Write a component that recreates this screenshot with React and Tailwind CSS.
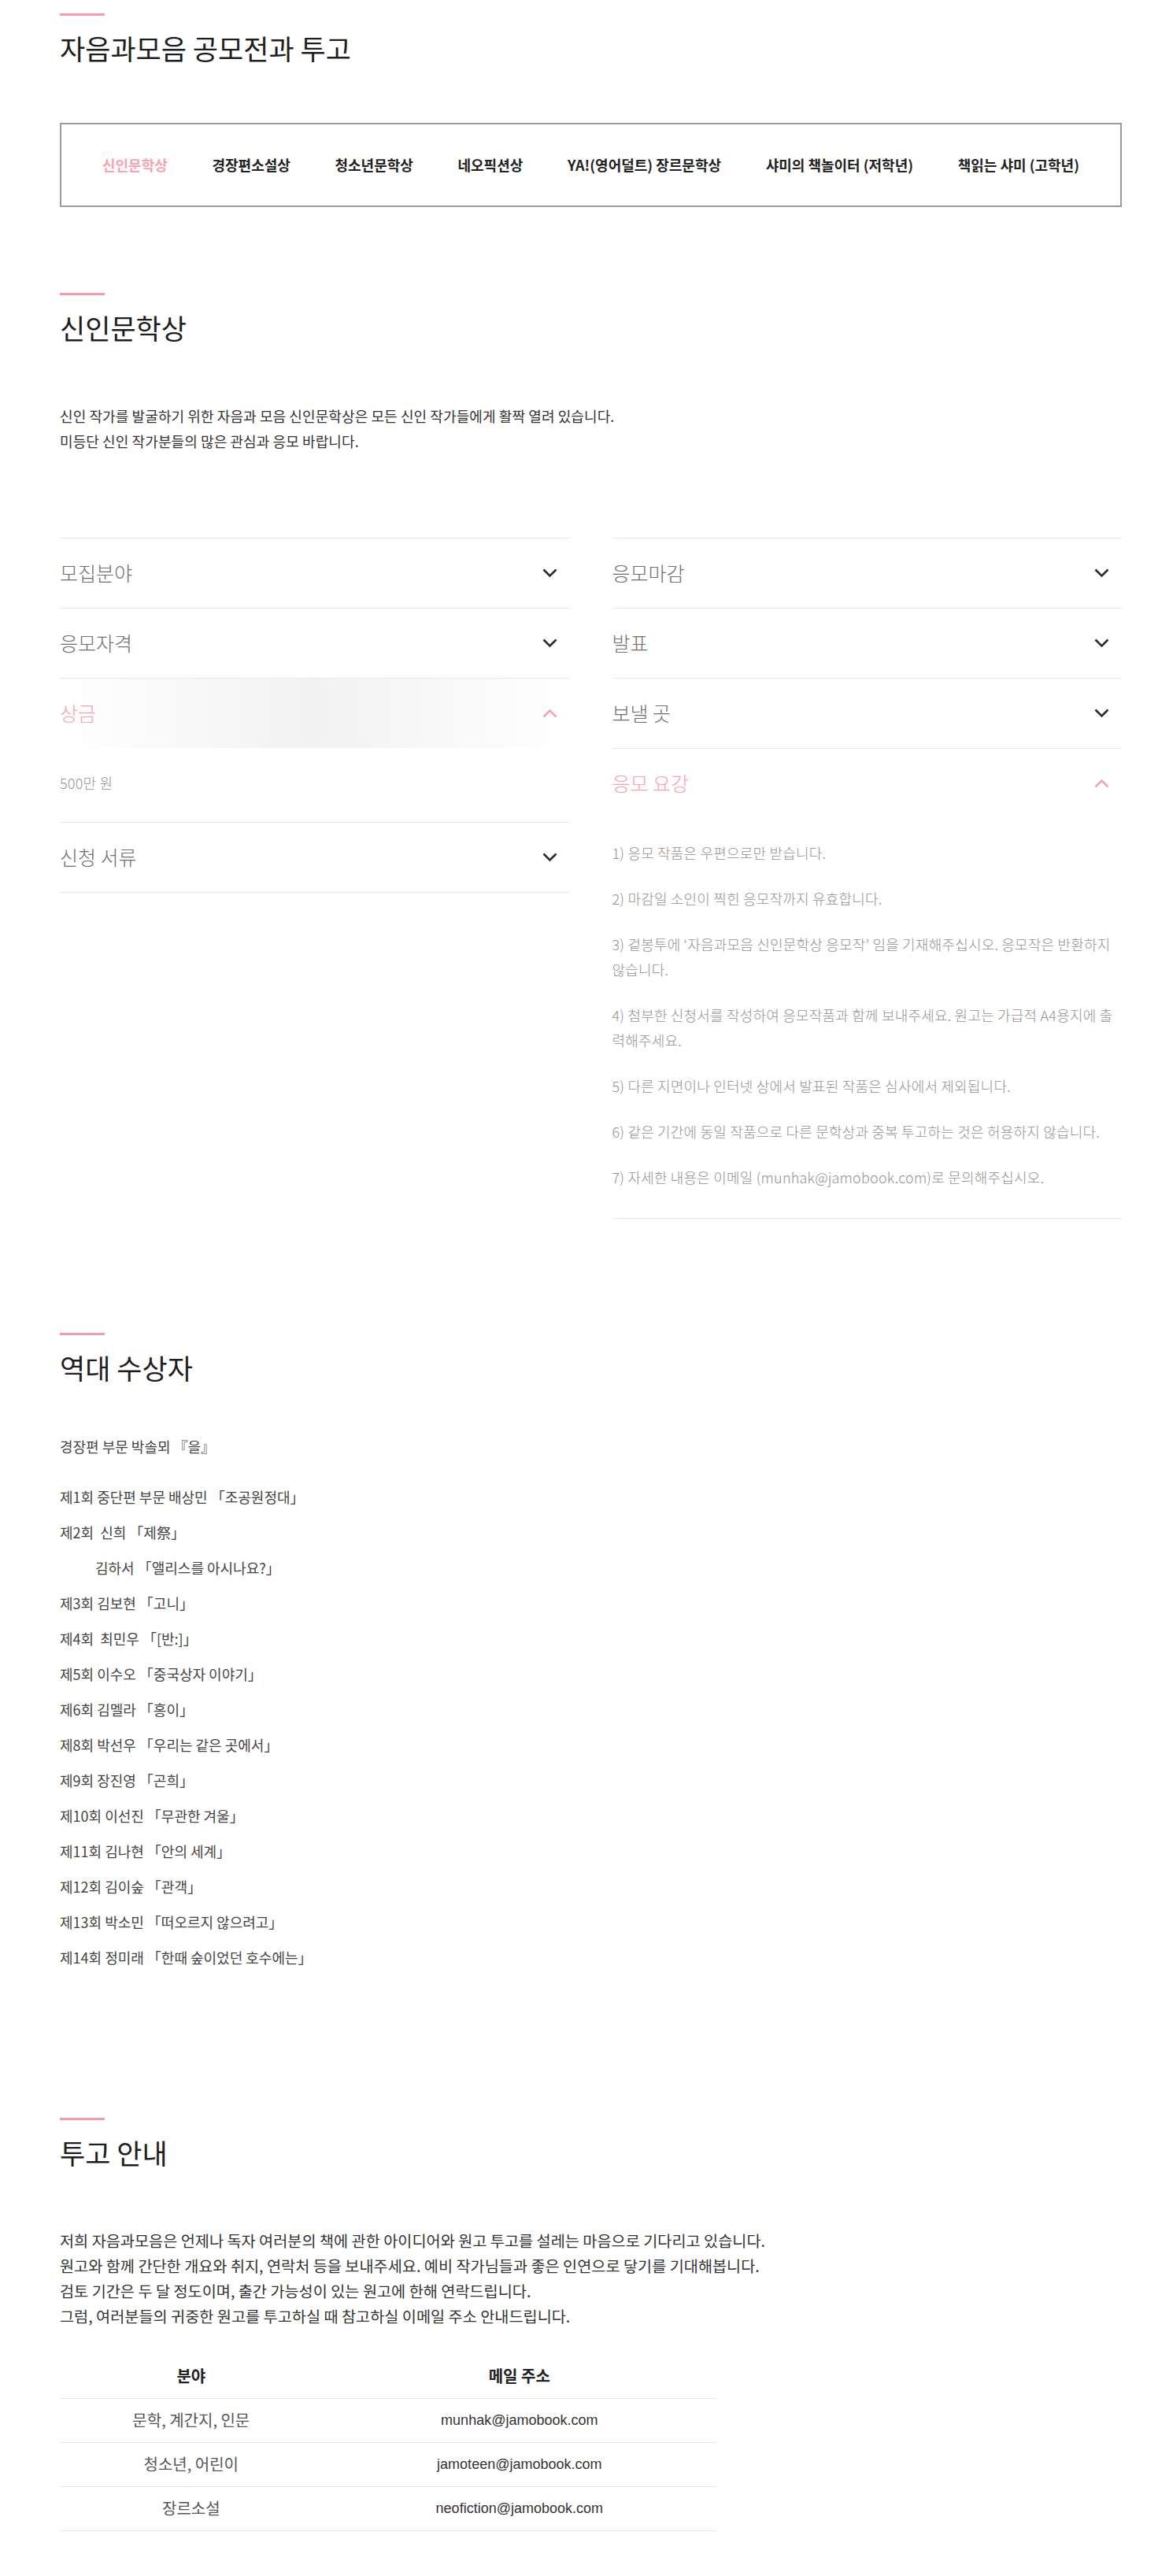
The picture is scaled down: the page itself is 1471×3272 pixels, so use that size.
import { useState } from "react";

const tabs = [
  "신인문학상",
  "경장편소설상",
  "청소년문학상",
  "네오픽션상",
  "YA!(영어덜트) 장르문학상",
  "샤미의 책놀이터 (저학년)",
  "책읽는 샤미 (고학년)",
];

const leftItems = [
  { title: "모집분야" },
  { title: "응모자격" },
  { title: "상금", open: true, shade: true, body: ["500만 원"] },
  { title: "신청 서류" },
];

const rightItems = [
  { title: "응모마감" },
  { title: "발표" },
  { title: "보낼 곳" },
  {
    title: "응모 요강",
    open: true,
    body: [
      "1) 응모 작품은 우편으로만 받습니다.",
      "2) 마감일 소인이 찍힌 응모작까지 유효합니다.",
      "3) 겉봉투에 ‘자음과모음 신인문학상 응모작’ 임을 기재해주십시오. 응모작은 반환하지 않습니다.",
      "4) 첨부한 신청서를 작성하여 응모작품과 함께 보내주세요. 원고는 가급적 A4용지에 출력해주세요.",
      "5) 다른 지면이나 인터넷 상에서 발표된 작품은 심사에서 제외됩니다.",
      "6) 같은 기간에 동일 작품으로 다른 문학상과 중복 투고하는 것은 허용하지 않습니다.",
      "7) 자세한 내용은 이메일 (munhak@jamobook.com)로 문의해주십시오.",
    ],
  },
];

const winners = [
  { text: "제1회 중단편 부문 배상민 「조공원정대」" },
  { text: "제2회  신희 「제祭」" },
  { text: "김하서 「앨리스를 아시나요?」", indent: true },
  { text: "제3회 김보현 「고니」" },
  { text: "제4회  최민우 「[반:]」" },
  { text: "제5회 이수오 「중국상자 이야기」" },
  { text: "제6회 김멜라 「홍이」" },
  { text: "제8회 박선우 「우리는 같은 곳에서」" },
  { text: "제9회 장진영 「곤희」" },
  { text: "제10회 이선진 「무관한 겨울」" },
  { text: "제11회 김나현 「안의 세계」" },
  { text: "제12회 김이숲 「관객」" },
  { text: "제13회 박소민 「떠오르지 않으려고」" },
  { text: "제14회 정미래 「한때 숲이었던 호수에는」" },
];

const mails = [
  ["문학, 계간지, 인문", "munhak@jamobook.com"],
  ["청소년, 어린이", "jamoteen@jamobook.com"],
  ["장르소설", "neofiction@jamobook.com"],
];

// Chevron drawn to match the thick square-ended arrow
function Chevron({ up }) {
  return (
    <svg width="19" height="12" viewBox="0 0 19 12" fill="none" className="shrink-0">
      <polyline
        points={up ? "1.5,10.5 9.5,2.5 17.5,10.5" : "1.5,1.5 9.5,9.5 17.5,1.5"}
        stroke={up ? "#f5a3b3" : "#2b2b2b"}
        strokeWidth="2.6"
      />
    </svg>
  );
}

function SectionTitle({ children }) {
  return (
    <div>
      <div className="w-[57px] h-[3px] bg-[#f49aad]" />
      <h2 className="mt-[20px] text-[35px] leading-[42px] text-[#1e1e1e] font-normal">{children}</h2>
    </div>
  );
}

function AccordionItem({ item, last, pt, pb }) {
  const [open, setOpen] = useState(!!item.open);
  return (
    <div className={`border-t border-[#efe6ea] ${last ? "border-b" : ""}`}>
      <button
        onClick={() => setOpen(!open)}
        className={`w-full h-[88px] flex items-center justify-between pr-[16px] text-left ${
          open && item.shade ? "bg-gradient-to-r from-white via-[#f2f2f2] to-white" : ""
        }`}
      >
        <span className={`text-[25px] font-light ${open ? "text-[#f5a3b3]" : "text-[#707070]"}`}>
          {item.title}
        </span>
        <Chevron up={open} />
      </button>
      {open && item.body && (
        <div style={{ paddingTop: pt, paddingBottom: pb }}>
          {item.body.map((p, i) => (
            <p
              key={i}
              className={`text-[18px] leading-[32px] tracking-[0.2px] font-light text-[#929292] ${
                i < item.body.length - 1 ? "mb-[26px]" : ""
              }`}
            >
              {p}
            </p>
          ))}
        </div>
      )}
    </div>
  );
}

export default function App() {
  const [active, setActive] = useState(0);

  return (
    <div
      className="bg-white min-h-[3272px] text-[#222]"
      style={{ fontFamily: '"Noto Sans CJK KR", "Noto Sans", sans-serif' }}
    >
      <div className="ml-[76px] w-[1349px] pt-[17px] pb-[57px]">
        {/* Page title */}
        <SectionTitle>자음과모음 공모전과 투고</SectionTitle>

        {/* Award tabs */}
        <nav className="mt-[74px] h-[107px] border-2 border-[#9a9a9a] flex items-center justify-between px-[52px]">
          {tabs.map((t, i) => (
            <button
              key={t}
              onClick={() => setActive(i)}
              className={`text-[18px] font-bold ${i === active ? "text-[#f7a3b4]" : "text-[#222]"}`}
            >
              {t}
            </button>
          ))}
        </nav>

        {/* 신인문학상 */}
        <section className="mt-[109px]">
          <SectionTitle>신인문학상</SectionTitle>
          <div className="mt-[75px] text-[18px] leading-[32px] tracking-[0.1px] text-[#333]">
            <p>신인 작가를 발굴하기 위한 자음과 모음 신인문학상은 모든 신인 작가들에게 활짝 열려 있습니다.</p>
            <p>미등단 신인 작가분들의 많은 관심과 응모 바랍니다.</p>
          </div>

          <div className="mt-[107px] grid grid-cols-2 gap-x-[54px] items-start">
            <div>
              {leftItems.map((it, i) => (
                <AccordionItem key={it.title} item={it} last={i === leftItems.length - 1} pt={28} pb={34} />
              ))}
            </div>
            <div>
              {rightItems.map((it, i) => (
                <AccordionItem key={it.title} item={it} last={i === rightItems.length - 1} pt={28} pb={36} />
              ))}
            </div>
          </div>
        </section>

        {/* 역대 수상자 */}
        <section className="mt-[145px]">
          <SectionTitle>역대 수상자</SectionTitle>
          <ul className="mt-[57px] text-[18px] leading-[45px] text-[#444]">
            <li className="mb-[19px]">경장편 부문 박솔뫼 『을』</li>
            {winners.map((w) => (
              <li key={w.text} className={`whitespace-pre ${w.indent ? "pl-[45px]" : ""}`}>
                {w.text}
              </li>
            ))}
          </ul>
        </section>

        {/* 투고 안내 */}
        <section className="mt-[181px]">
          <SectionTitle>투고 안내</SectionTitle>
          <div className="mt-[75px] text-[19.7px] leading-[32px] text-[#333]">
            <p>저희 자음과모음은 언제나 독자 여러분의 책에 관한 아이디어와 원고 투고를 설레는 마음으로 기다리고 있습니다.</p>
            <p>원고와 함께 간단한 개요와 취지, 연락처 등을 보내주세요. 예비 작가님들과 좋은 인연으로 닿기를 기대해봅니다.</p>
            <p>검토 기간은 두 달 정도이며, 출간 가능성이 있는 원고에 한해 연락드립니다.</p>
            <p>그럼, 여러분들의 귀중한 원고를 투고하실 때 참고하실 이메일 주소 안내드립니다.</p>
          </div>

          <table className="mt-[32px] w-[834px] table-fixed border-collapse">
            <thead>
              <tr className="h-[56px] border-b border-[#efe6ea] text-[20px]">
                <th className="w-[40%] font-bold text-[#222]">분야</th>
                <th className="w-[60%] font-bold text-[#222]">메일 주소</th>
              </tr>
            </thead>
            <tbody>
              {mails.map(([field, mail]) => (
                <tr key={mail} className="h-[56px] border-b border-[#efe6ea]">
                  <td className="text-center text-[20px] text-[#555]">{field}</td>
                  <td
                    className="text-center text-[18px] text-[#333]"
                    style={{ fontFamily: '"Liberation Sans", Arial, sans-serif' }}
                  >
                    {mail}
                  </td>
                </tr>
              ))}
            </tbody>
          </table>
        </section>
      </div>
    </div>
  );
}
